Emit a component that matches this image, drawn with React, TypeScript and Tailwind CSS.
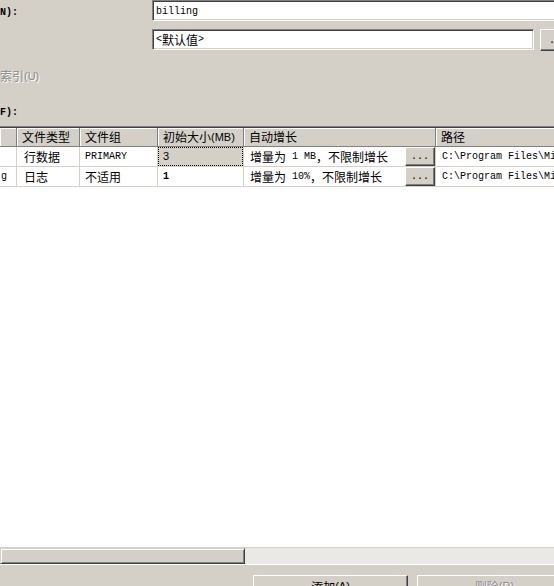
import React from 'react';

// Classic Win2000-style "New Database" dialog, cropped

const CJK = /[\u3000-\u9fff\uff00-\uffef]/;

// split mixed text so CJK runs use the CJK font at 12px, latin runs mono 10px
function Mixed({ text, latin = 'mono' }: { text: string; latin?: 'mono' | 'sans' }) {
  const runs: { cjk: boolean; s: string }[] = [];
  for (const ch of text) {
    const c = CJK.test(ch);
    const last = runs[runs.length - 1];
    if (last && last.cjk === c) last.s += ch;
    else runs.push({ cjk: c, s: ch });
  }
  return (
    <>
      {runs.map((r, i) =>
        r.cjk ? (
          <span key={i} className="font-['Noto_Sans_CJK_SC',sans-serif] text-[12px]">
            {r.s}
          </span>
        ) : latin === 'mono' ? (
          <span key={i} className="font-['Liberation_Mono',monospace] text-[10px] whitespace-pre">
            {r.s}
          </span>
        ) : (
          <span key={i} className="font-['Liberation_Sans',sans-serif] text-[11px] whitespace-pre">
            {r.s}
          </span>
        )
      )}
    </>
  );
}

function Sunken({ className, children }: { className: string; children?: React.ReactNode }) {
  return (
    <div
      className={`bg-white border border-t-[#808080] border-l-[#808080] border-b-white border-r-white shadow-[inset_1px_1px_0_#404040,inset_-1px_-1px_0_#d4d0c8] flex items-center pl-[3px] ${className}`}
    >
      {children}
    </div>
  );
}

function Raised({ className, children }: { className: string; children?: React.ReactNode }) {
  return (
    <div
      className={`bg-[#d4d0c8] border border-t-white border-l-white border-b-[#404040] border-r-[#404040] shadow-[inset_-1px_-1px_0_#808080] flex items-center justify-center ${className}`}
    >
      {children}
    </div>
  );
}

const cols = 'grid grid-cols-[17px_63px_78px_86px_192px_220px]';

const headers = ['', '文件类型', '文件组', '初始大小(MB)', '自动增长', '路径'];

const rows = [
  { name: '', type: '行数据', group: 'PRIMARY', size: '3', growth: '增量为 1 MB，不限制增长', path: 'C:\\Program Files\\Microsoft SQL Server\\MSSQL\\data\\', focus: true },
  { name: 'g', type: '日志', group: '不适用', size: '1', growth: '增量为 10%，不限制增长', path: 'C:\\Program Files\\Microsoft SQL Server\\MSSQL\\data\\', focus: false },
];

export default function App() {
  return (
    <div className="w-[554px] h-[586px] overflow-hidden bg-[#d4d0c8] flex flex-col text-black select-none">
      {/* name */}
      <div className="flex h-[21px] shrink-0">
        <div className="w-[152px] shrink-0 flex items-center pt-[3px] font-['Liberation_Mono',monospace] text-[10px] font-bold">N):</div>
        <Sunken className="w-[430px] shrink-0 h-[21px] pt-[2px]">
          <span className="font-['Liberation_Mono',monospace] text-[10px]">billing</span>
        </Sunken>
      </div>

      {/* owner */}
      <div className="flex h-[22px] mt-[8px] shrink-0">
        <div className="w-[152px] shrink-0" />
        <Sunken className="w-[382px] shrink-0 h-[21px]">
          <Mixed text="<默认值>" />
        </Sunken>
        <Raised className="ml-[6px] w-[30px] shrink-0 h-[22px] items-end pb-[4px]">
          <span className="font-['Liberation_Mono',monospace] text-[10px] leading-none pl-[6px] self-end">...</span>
        </Raised>
      </div>

      {/* full-text index, disabled */}
      <div className="mt-[18px] h-[14px] flex items-center text-[#8a8a8a] [text-shadow:1px_1px_0_#fff] shrink-0">
        <Mixed text="索引(U)" latin="sans" />
      </div>

      <div className="mt-[22px] h-[14px] flex items-center pt-[1px] font-['Liberation_Mono',monospace] text-[10px] font-bold shrink-0">F):</div>

      {/* data files grid */}
      <div className="mt-[7px] h-[439px] shrink-0 flex flex-col bg-white border-t border-t-[#808080] border-b border-b-white overflow-hidden">
        <div className={`${cols} h-[20px] shrink-0 bg-[#404040] pt-px`}>
          {headers.map((h, i) => (
            <div
              key={i}
              className="bg-[#d4d0c8] border-r border-b border-[#808080] shadow-[inset_1px_1px_0_#fff] flex items-center pl-[5px] overflow-hidden whitespace-nowrap"
            >
              <Mixed text={h} latin="sans" />
            </div>
          ))}
        </div>

        {rows.map((r, i) => (
          <div key={i} className={`${cols} h-[20px] shrink-0`}>
            <div className="border-r border-b border-[#d4d0c8] flex items-center pl-[1px] overflow-hidden">
              <span className="font-['Liberation_Mono',monospace] text-[10px]">{r.name}</span>
            </div>
            <div className="border-r border-b border-[#d4d0c8] flex items-center pl-[7px] overflow-hidden">
              <Mixed text={r.type} />
            </div>
            <div className="border-r border-b border-[#d4d0c8] flex items-center pl-[5px] overflow-hidden">
              <Mixed text={r.group} />
            </div>
            {r.focus ? (
              <div className="border-r border-b border-[#d4d0c8] bg-[#d4d0c8] p-0">
                <div className="h-full border border-dotted border-black flex items-center pl-[4px]">
                  <span className="font-['Liberation_Sans',sans-serif] text-[11px]">{r.size}</span>
                </div>
              </div>
            ) : (
              <div className="border-r border-b border-[#d4d0c8] flex items-center pl-[5px]">
                <span className="font-['Liberation_Mono',monospace] text-[10px] font-bold">{r.size}</span>
              </div>
            )}
            <div className="border-r border-b border-[#d4d0c8] flex items-center pl-[6px] overflow-hidden whitespace-nowrap">
              <Mixed text={r.growth} />
              <Raised className="ml-auto w-[30px] h-[19px] shrink-0 items-end pb-[3px]">
                <span className="font-['Liberation_Mono',monospace] text-[10px] leading-none">...</span>
              </Raised>
            </div>
            <div className="border-b border-[#d4d0c8] flex items-center pl-[6px] overflow-hidden whitespace-nowrap">
              <span className="font-['Liberation_Mono',monospace] text-[10px]">{r.path}</span>
            </div>
          </div>
        ))}

        <div className="flex-1" />

        {/* horizontal scrollbar */}
        <div className="h-[17px] shrink-0 flex bg-[#ebe9e5] border-t border-t-[#d4d0c8]">
          <div className="w-[245px] h-full bg-[#d4d0c8] border border-t-[#d4d0c8] border-l-[#d4d0c8] border-b-[#404040] border-r-[#404040] shadow-[inset_1px_1px_0_#fff,inset_-1px_-1px_0_#808080]" />
        </div>
      </div>

      {/* add / remove buttons */}
      <div className="mt-[10px] flex gap-[9px] pl-[253px] shrink-0">
        <Raised className="w-[155px] h-[23px] shrink-0">
          <Mixed text="添加(A)" latin="sans" />
        </Raised>
        <Raised className="w-[155px] h-[23px] shrink-0 text-[#8a8a8a] [text-shadow:1px_1px_0_#fff]">
          <Mixed text="删除(R)" latin="sans" />
        </Raised>
      </div>
    </div>
  );
}
